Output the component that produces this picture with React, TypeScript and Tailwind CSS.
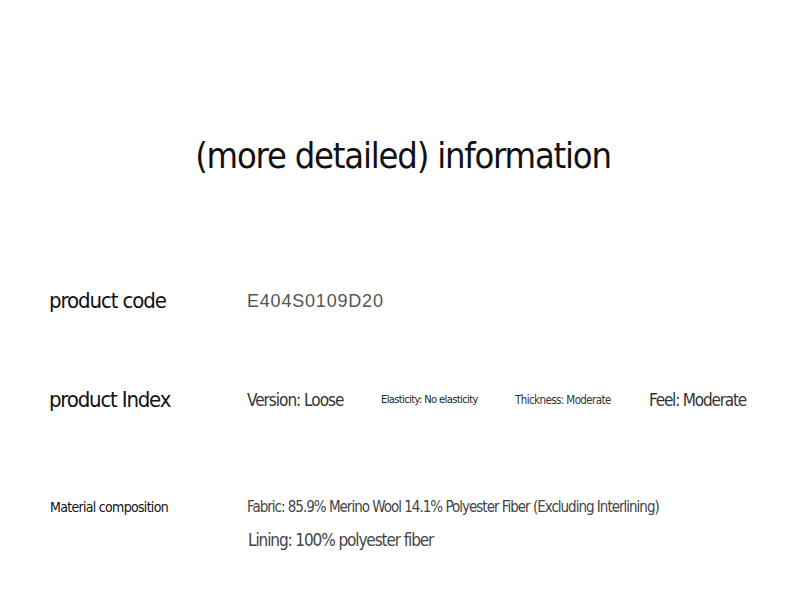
import React from 'react';

const cond = { fontFamily: '"DejaVu Sans Condensed", "DejaVu Sans", sans-serif', fontStretch: 'condensed' } as React.CSSProperties;

function App() {
  return (
    <div className="h-[593px] w-[790px] bg-white text-[#222]" style={cond}>
      <h1 className="pl-[16px] pt-[130px] text-center text-[36px] leading-[52px] tracking-[-1.2px] text-[#111]">
        (more detailed) information
      </h1>

      <div className="mt-[104px] flex items-center pl-[49px]">
        <div className="w-[198px] text-[22px] leading-[30px] tracking-[-1.1px] text-[#111]">product code</div>
        <div
          className="text-[18px] leading-[24px] tracking-[0.8px] text-[#555]"
          style={{ fontFamily: '"Liberation Sans", Arial, sans-serif' }}
        >
          E404S0109D20
        </div>
      </div>

      <div className="mt-[69px] flex items-center pl-[49px]">
        <div className="w-[198px] text-[22px] leading-[30px] tracking-[-1.2px] text-[#111]">product Index</div>
        <div className="grid w-[536px] grid-cols-4 items-center text-[#333]">
          <div className="text-[17px] leading-[24px] tracking-[-1px]">Version: Loose</div>
          <div className="text-[11px] leading-[24px] tracking-[-0.6px] text-[#222]">Elasticity: No elasticity</div>
          <div className="text-[11.5px] leading-[24px] tracking-[-0.6px]">Thickness: Moderate</div>
          <div className="text-[17px] leading-[24px] tracking-[-1.2px]">Feel: Moderate</div>
        </div>
      </div>

      <div className="mt-[80px] flex items-start pl-[49px]">
        <div className="w-[198px] pl-px text-[14px] leading-[24px] tracking-[-0.7px] text-[#111]">Material composition</div>
        <div className="text-[#444]">
          <div className="text-[15px] leading-[24px] tracking-[-1px]">Fabric: 85.9% Merino Wool 14.1% Polyester Fiber (Excluding Interlining)</div>
          <div className="mt-[9px] pl-px text-[17px] leading-[24px] tracking-[-1.1px]">Lining: 100% polyester fiber</div>
        </div>
      </div>
    </div>
  );
}

export default App;
